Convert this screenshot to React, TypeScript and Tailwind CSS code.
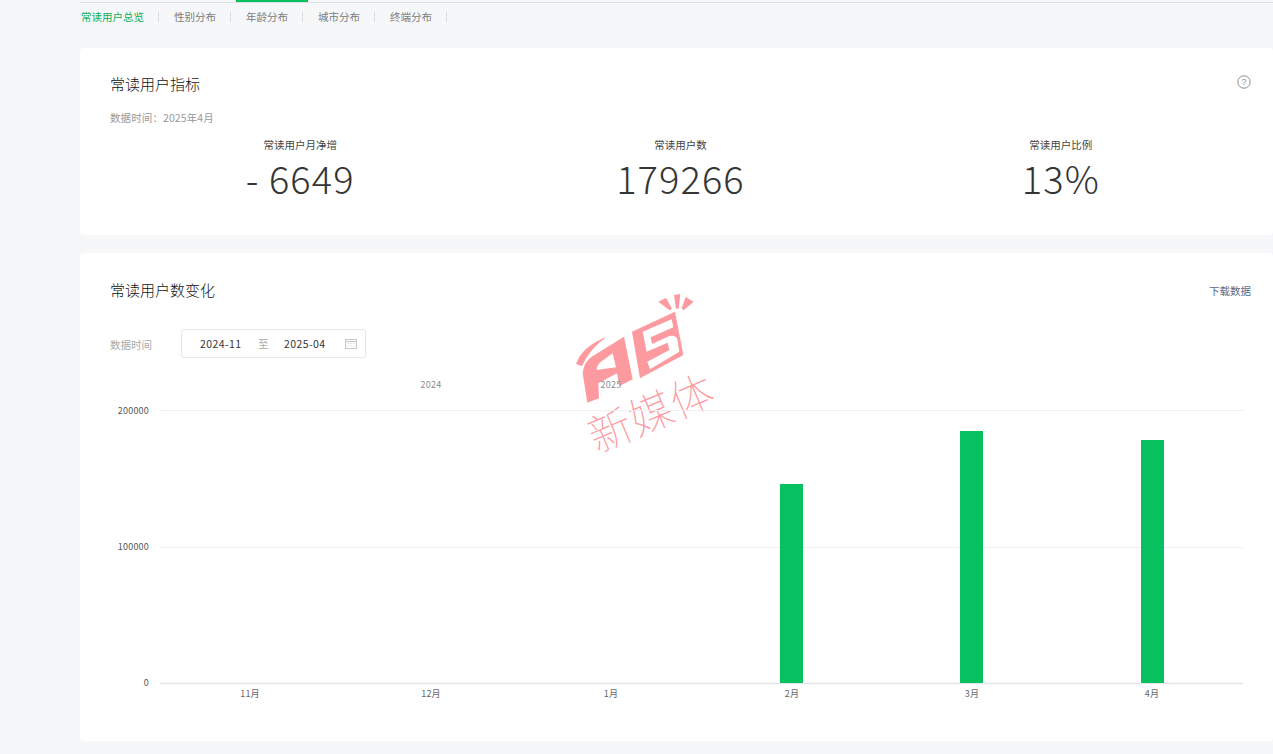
const FONT = '"Noto Sans CJK SC", "Noto Sans", sans-serif';
const tabs = ["常读用户总览", "性别分布", "年龄分布", "城市分布", "终端分布"];
const stats = [
  { label: "常读用户月净增", value: "- 6649" },
  { label: "常读用户数", value: "179266" },
  { label: "常读用户比例", value: "13%" },
];
const months = [
  { m: "11月", x: 140 },
  { m: "12月", x: 321 },
  { m: "1月", x: 501 },
  { m: "2月", x: 682 },
  { m: "3月", x: 862 },
  { m: "4月", x: 1042 },
];
const bars = [
  { x: 670, y: 114, h: 199 },
  { x: 850, y: 61, h: 252 },
  { x: 1031, y: 70, h: 243 },
];

function Watermark() {
  return (
    <svg viewBox="0 0 660 540" className="absolute left-[440px] top-[27px] h-[180px] w-[220px] overflow-visible">
      <g transform="translate(150 30)" fill="#fd9a9f">
        <path d="M18 222 Q35 170 110 140 Q60 175 36 228 Z" />
        <path
          fillRule="evenodd"
          d="M52 338 L38 250 Q40 218 65 200 L162 140 L188 268 L148 288 L141 250 L85 280 L87 325 Z M80 240 Q80 225 92 216 L128 190 L138 232 Z"
        />
        <path d="M186 125 L315 65 L340 195 L210 265 Z" />
        <path
          transform="translate(180 30)"
          fill="#fff"
          d="M38 95 L125 58 L130 82 L62 112 L66 132 L118 108 Q138 104 142 118 L148 155 L60 208 L52 185 L118 150 L113 128 L50 155 Z"
        />
        <path d="M265 35 L288 24 L306 56 L299 61 Z M312 15 L331 12 L326 56 L318 56 Z M347 21 L371 35 L341 61 L335 55 Z" />
      </g>
      <text
        x="395"
        y="447"
        textAnchor="middle"
        transform="rotate(-23 395 402)"
        fontSize="130"
        fontWeight="100"
        fill="#fd9a9f"
        style={{ fontFamily: '"Noto Sans CJK SC", sans-serif', letterSpacing: "2px" }}
      >
        新媒体
      </text>
    </svg>
  );
}

function CalendarIcon() {
  return (
    <svg width="12" height="10" viewBox="0 0 12 10" fill="none" stroke="#c8c8c8" strokeWidth="1">
      <rect x="0.5" y="0.5" width="11" height="9" />
      <path d="M0.5 2.5H11.5" />
      <path d="M2.5 4.5H3.5M5.5 4.5H6.5M8.5 4.5H9.5M2.5 7H3.5M5.5 7H6.5M8.5 7H9.5" />
    </svg>
  );
}

function HelpIcon() {
  return (
    <svg width="14" height="14" viewBox="0 0 14 14" fill="none">
      <circle cx="7" cy="7" r="6.2" stroke="#8d8d8d" strokeWidth="1" />
      <text x="7" y="10.2" textAnchor="middle" fontSize="9" fill="#8d8d8d" style={{ fontFamily: '"Liberation Sans", sans-serif' }}>
        ?
      </text>
    </svg>
  );
}

function Chart() {
  const f = { fontFamily: '"Noto Sans CJK SC", sans-serif', letterSpacing: "0.2px" };
  return (
    <svg width="1163" height="340" className="relative mt-[12px] block" style={f}>
      <text x="321" y="18" textAnchor="middle" fontSize="9" fill="#8c8c8c">2024</text>
      <text x="501" y="18" textAnchor="middle" fontSize="9" fill="#8c8c8c">2025</text>
      <path d="M50 40.5H1133M50 177.5H1133" stroke="#eeeff1" strokeWidth="1" />
      <path d="M50 313.5H1133" stroke="#e3e5e9" strokeWidth="1.5" />
      <text x="39" y="44" textAnchor="end" fontSize="9" fill="#555">200000</text>
      <text x="39" y="180" textAnchor="end" fontSize="9" fill="#555">100000</text>
      <text x="39" y="316" textAnchor="end" fontSize="9" fill="#555">0</text>
      {bars.map((b) => (
        <rect key={b.x} x={b.x} y={b.y} width="23" height={b.h} fill="#07c160" />
      ))}
      {months.map((m) => (
        <text key={m.m} x={m.x} y="327" textAnchor="middle" fontSize="9" fill="#666">
          {m.m}
        </text>
      ))}
    </svg>
  );
}

export default function App() {
  return (
    <div className="h-[754px] w-full overflow-hidden bg-[#f6f7f9] pl-[80px]" style={{ fontFamily: FONT }}>
      <div className="h-[3px] border-b border-[#dfe2e5]">
        <div className="ml-[156px] h-[2px] w-[72px] bg-[#07c160]" />
      </div>

      <div className="flex h-[27px] items-center">
        {tabs.map((t, i) => (
          <div key={t} className={`flex items-center ${i === 0 ? "pl-px" : "pl-[15px]"}`}>
            <span className={`text-[10.5px] leading-[14px] ${i === 0 ? "text-[#07b05a]" : "text-[#7b7b7b]"}`}>{t}</span>
            <span className="ml-[14px] h-[10px] w-px bg-[#dcdcdc]" />
          </div>
        ))}
      </div>

      <section className="mt-[18px] h-[187px] rounded-[4px] bg-white pl-[30px] pr-[22px]">
        <div className="flex h-[47px] items-end justify-between pb-px">
          <h2 className="text-[15px] font-light leading-[20px] text-[#111]">常读用户指标</h2>
          <div className="mb-[5px]">
            <HelpIcon />
          </div>
        </div>
        <p className="mt-[16px] text-[10.5px] leading-[14px] tracking-[0.1px] text-[#999]">数据时间：2025年4月</p>
        <div className="mt-[13px] grid grid-cols-3">
          {stats.map((s) => (
            <div key={s.label} className="flex flex-col items-center">
              <span className="text-[10.5px] leading-[14px] text-[#444]">{s.label}</span>
              <span className="text-[38px] font-light leading-[52px] tracking-[1.1px] text-[#353535]">{s.value}</span>
            </div>
          ))}
        </div>
      </section>

      <section className="relative mt-[18px] h-[488px] rounded-[4px] bg-white pl-[30px]">
        <Watermark />
        <div className="relative flex h-[47px] items-end justify-between pr-[22px]">
          <h2 className="text-[15px] font-light leading-[20px] text-[#111]">常读用户数变化</h2>
          <span className="mb-[2px] text-[10.5px] leading-[14px] text-[#5c6b85]">下载数据</span>
        </div>
        <div className="relative mt-[29px] flex items-center">
          <span className="mt-[2px] w-[71px] text-[10.5px] leading-[14px] text-[#aaa]">数据时间</span>
          <div className="flex h-[29px] w-[185px] items-center rounded-[3px] border border-[#e7e7eb] pl-[18px]">
            <span className="w-[42px] text-[10.5px] tracking-[0.4px] text-[#353535]">2024-11</span>
            <span className="ml-[16px] w-[12px] text-[10.5px] text-[#aaa]">至</span>
            <span className="ml-[14px] w-[42px] text-[10.5px] tracking-[0.4px] text-[#353535]">2025-04</span>
            <span className="ml-[19px] flex">
              <CalendarIcon />
            </span>
          </div>
        </div>
        <Chart />
      </section>
    </div>
  );
}
